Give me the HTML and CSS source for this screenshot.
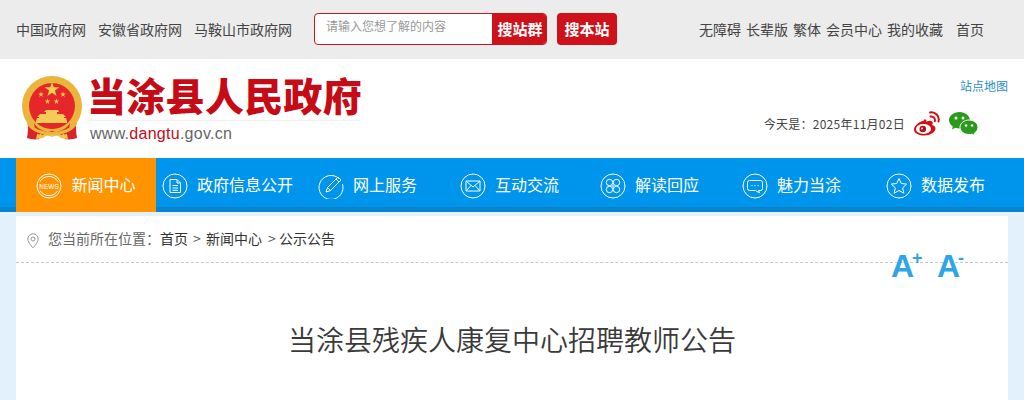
FILE: index.html
```html
<!DOCTYPE html>
<html lang="zh-CN">
<head>
<meta charset="utf-8">
<title>当涂县残疾人康复中心招聘教师公告</title>
<link rel="stylesheet" href="styles.css">
</head>
<body>
<div class="topbar">
  <div class="top-links">
    <a>中国政府网</a><a>安徽省政府网</a><a>马鞍山市政府网</a>
  </div>
  <div class="search">
    <div class="search-box">
      <span class="placeholder">请输入您想了解的内容</span>
      <span class="btn-group">搜站群</span>
    </div>
    <span class="btn-site">搜本站</span>
  </div>
  <div class="top-right">
    <a>无障碍</a><a>长辈版</a><a>繁体</a><a>会员中心</a><a>我的收藏</a><a class="home">首页</a>
  </div>
</div>

<header class="header">
  <div class="brand">
    <svg class="emblem" viewBox="0 0 60 64" width="60" height="64">
      <circle cx="30" cy="30" r="30" fill="#eab53a"/>
      <circle cx="30" cy="30" r="23" fill="#e5262b"/>
      <path d="M6 47c4 4 8 7 13 9l-2 7c-4 1-9 0-12-1 1-5 1-10 1-15zM54 47c-4 4-8 7-13 9l2 7c4 1 9 0 12-1-1-5-1-10-1-15z" fill="#d9232a"/>
      <path d="M12 47c3 6 10 9 18 9s15-3 18-9l-1 6-8 7-4-3-5-2-5 2-4 3-8-7z" fill="#d9232a"/>
      <path d="M14 63l1-5 6 1 4-4 5 2 5-2 4 4 6-1 1 5-7-1-4-3-5 2-5-2-4 3z" fill="#f0c24c"/>
      <path d="M30 6l1.800 5.300h5.600l-4.500 3.300 1.700 5.400-4.600-3.300-4.600 3.300 1.700-5.400-4.500-3.300h5.600z" fill="#f7d14c"/>
      <path d="M19 15.500l.7 2h2.100l-1.700 1.300.6 2.100-1.700-1.300-1.700 1.300.6-2.100-1.700-1.300h2.100zM41 15.500l.7 2h2.100l-1.700 1.300.6 2.100-1.700-1.300-1.700 1.300.6-2.100-1.700-1.300h2.100zM25.500 22.500l.7 2h2.100l-1.700 1.300.6 2.100-1.700-1.300-1.700 1.300.6-2.100-1.700-1.300h2.100zM34.500 22.500l.7 2h2.100l-1.700 1.300.6 2.100-1.700-1.300-1.700 1.300.6-2.100-1.700-1.300h2.100z" fill="#f7d14c"/>
      <path d="M24 34h12l1 2h-2v2h6l3 3h-2v1h2l1 3v2H14v-2l1-3h2v-1h-2l3-3h6v-2h-2z" fill="#f3cb56"/>
      <path d="M6 45c4 7 14 11 24 11s20-4 24-11l1 3c-4 8-15 11-25 11S9 56 5 48z" fill="#eab53a"/>
    </svg>
    <div class="brand-text">
      <div class="site-name">当涂县人民政府</div>
      <div class="site-url">www.<span class="url-red">dangtu</span>.gov.cn</div>
    </div>
  </div>
  <div class="header-right">
    <a class="sitemap">站点地图</a>
    <div class="date-row">
      <span class="date">今天是：2025年11月02日</span>
      <svg class="weibo" viewBox="0 0 27 25" width="27" height="25">
        <path d="M11 9.500C5.500 11 1 15 1 18.500 1 22 5.500 24.500 11 24.500c6.500 0 11.500-3.500 11.500-7 0-2-2-3-3.300-3.400.7-1.600.7-3-.2-3.800-1.300-1.100-3.700-.6-5.800.4.600-2-.3-2.500-2.200-2.200z" fill="#d40f12"/>
        <ellipse cx="10.500" cy="18" rx="7.500" ry="5" fill="#fff"/>
        <circle cx="9.800" cy="18" r="3.300" fill="#b80d12"/>
        <circle cx="9" cy="17.500" r="1" fill="#fff"/>
        <path d="M17 1.500c5-1 10 3.500 8.500 9M17.500 5.500c2.800-.6 5 2 4.300 4.700" fill="none" stroke="#d40f12" stroke-width="2" stroke-linecap="round"/>
      </svg>
      <svg class="wechat" viewBox="0 0 29 24" width="29" height="24">
        <path d="M10.500 0C4.700 0 0 3.700 0 8.300c0 2.600 1.500 4.800 3.800 6.300L3 17.500l3.300-1.700c1.400.4 2.800.6 4.200.6 5.800 0 10.500-3.700 10.500-8.100S16.300 0 10.500 0z" fill="#2a9a1c"/>
        <path d="M20 8c-4.800 0-9 3.200-9 7.300s4.200 7.200 9 7.200c1 0 2-.1 3-.4l3 1.700-.7-2.500c2.200-1.500 3.700-3.600 3.700-6 0-4.100-4.200-7.300-9-7.300z" fill="#2a9a1c" stroke="#fff" stroke-width="1"/>
        <circle cx="7" cy="6" r="1.500" fill="#fff"/><circle cx="14" cy="6" r="1.500" fill="#fff"/>
        <circle cx="17" cy="13.500" r="1.300" fill="#fff"/><circle cx="23" cy="13.500" r="1.300" fill="#fff"/>
      </svg>
    </div>
  </div>
</header>

<nav class="nav">
  <div class="nav-inner">
    <a class="nav-item active">
      <svg class="nav-icon" viewBox="0 0 26 26"><circle cx="13" cy="13" r="12" class="ic"/><path d="M4 8.500a10.500 10.500 0 0 1 18 0M4 17.500a10.500 10.500 0 0 0 18 0" class="ic"/><text x="13" y="15.500" class="news-text">NEWS</text></svg>
      <span>新闻中心</span>
    </a>
    <a class="nav-item">
      <svg class="nav-icon" viewBox="0 0 26 26"><circle cx="13" cy="13" r="12" class="ic"/><path d="M8 6.500h7l3.500 3.500v9.500H8zM15 6.500V10h3.500M10.500 12.500h5.500M10.500 15h5.500M10.500 17.300h5.500" class="ic"/></svg>
      <span>政府信息公开</span>
    </a>
    <a class="nav-item">
      <svg class="nav-icon" viewBox="0 0 26 26"><path d="M21 5.500A12 12 0 1 0 24.500 11" class="ic"/><path d="M8 19l1.500-4.500L20 4l3 3-10.500 10.500zM9.500 14.500l3 3M18 6l3 3" class="ic"/></svg>
      <span>网上服务</span>
    </a>
    <a class="nav-item">
      <svg class="nav-icon" viewBox="0 0 26 26"><circle cx="13" cy="13" r="12" class="ic"/><path d="M6 8h14v10H6zM6 8l7 6 7-6M6 18l5-5.500M20 18l-5-5.500" class="ic"/></svg>
      <span>互动交流</span>
    </a>
    <a class="nav-item">
      <svg class="nav-icon" viewBox="0 0 26 26"><circle cx="13" cy="13" r="12" class="ic"/><circle cx="9.500" cy="9.500" r="3.200" class="ic"/><circle cx="16.500" cy="9.500" r="3.200" class="ic"/><circle cx="9.500" cy="16.500" r="3.200" class="ic"/><circle cx="16.500" cy="16.500" r="3.200" class="ic"/><circle cx="13" cy="13" r="1.800" fill="#8fd0f7"/></svg>
      <span>解读回应</span>
    </a>
    <a class="nav-item">
      <svg class="nav-icon" viewBox="0 0 26 26"><circle cx="13" cy="13" r="12" class="ic"/><path d="M7.500 7.500h11a2 2 0 0 1 2 2v6a2 2 0 0 1-2 2h-2l1 2.500-4-2.500h-6a2 2 0 0 1-2-2v-6a2 2 0 0 1 2-2z" class="ic"/><path d="M9.500 12.500h1M12.500 12.500h1M15.500 12.500h1" class="ic"/></svg>
      <span>魅力当涂</span>
    </a>
    <a class="nav-item">
      <svg class="nav-icon" viewBox="0 0 26 26"><circle cx="13" cy="13" r="12" class="ic"/><path d="M13 5.500l2.300 5 5.400.6-4 3.700 1.100 5.400-4.800-2.700-4.800 2.700 1.100-5.400-4-3.700 5.400-.6z" class="ic"/></svg>
      <span>数据发布</span>
    </a>
  </div>
</nav>

<main class="main">
  <div class="crumb">
    <svg class="pin" viewBox="0 0 12 16" width="12" height="16"><path d="M6 .8a5.200 5.200 0 0 1 5.200 5.200C11.200 9.500 6 15 6 15S.8 9.500.8 6A5.200 5.200 0 0 1 6 .8z" fill="none" stroke="#999" stroke-width="1"/><circle cx="6" cy="6" r="2" fill="none" stroke="#999"/></svg>
    <span class="crumb-label">您当前所在位置：</span>
    <a>首页</a><span class="sep">&gt;</span><a>新闻中心</a><span class="sep sep-wide">&gt;</span><a>公示公告</a>
  </div>
  <div class="font-size">
    <span class="fs-btn">A<span class="fs-mark">+</span></span>
    <span class="fs-btn">A<span class="fs-mark">-</span></span>
  </div>
  <h1 class="title">当涂县残疾人康复中心招聘教师公告</h1>
</main>
</body>
</html>
```

FILE: styles.css
```css
* { box-sizing: border-box; }
html, body { margin: 0; padding: 0; }
body {
  background: #e3f1fd;
  font-family: "Noto Sans CJK SC", "Liberation Sans", sans-serif;
  font-weight: 400;
  color: #333;
  height: 400px;
  overflow: hidden;
}
.topbar {
  height: 59px;
  background: #ececec;
  display: flex;
  align-items: center;
  padding: 0 16px 1px;
  font-size: 14px;
  color: #444;
}
.top-links { display: flex; gap: 12px; width: 298px; }
.search { display: flex; gap: 10px; width: 385px; height: 32px; }
.search-box {
  width: 233px;
  display: flex;
  justify-content: space-between;
  border: 1px solid #c8161d;
  border-radius: 4px;
  background: #fff;
  overflow: hidden;
}
.placeholder { font-size: 12px; color: #999; padding: 3px 0 0 11px; line-height: 18px; }
.btn-group, .btn-site {
  background: #cf111b;
  color: #fff;
  font-size: 15px;
  font-weight: 700;
  line-height: 30px;
  text-align: center;
}
.btn-group { width: 54px; padding-left: 2px; }
.btn-site { width: 60px; border-radius: 4px; line-height: 32px; }
.top-right { display: flex; gap: 5px; }
.top-right .home { margin-left: 8px; }
.header {
  height: 99px;
  background: #fff;
  display: flex;
  justify-content: space-between;
  padding: 0 16px;
}
.brand { display: flex; padding: 17px 0 0 6px; }
.emblem { margin-right: 5px; }
.brand-text { width: 273px; }
.site-name {
  font-family: "Noto Sans CJK SC", sans-serif;
  font-size: 39px;
  font-weight: 900;
  letter-spacing: 0.3px;
  color: #c60a16;
  line-height: 36px;
  white-space: nowrap;
  border-bottom: 1px solid #f0f0f0;
  height: 45px;
}
.site-url {
  font-family: "Liberation Sans", sans-serif;
  font-size: 16px;
  letter-spacing: 0.27px;
  color: #666;
  line-height: 26px;
  padding-left: 3px;
}
.url-red { color: #c60a16; }
.header-right {
  display: flex;
  flex-direction: column;
  align-items: flex-end;
  padding-top: 18px;
}
.sitemap { font-size: 12px; color: #2a8ec8; line-height: 18px; }
.date-row { display: flex; align-items: center; margin-top: 16px; margin-right: 30px; }
.date { font-size: 12px; color: #444; margin-right: 8px; letter-spacing: 0.27px; }
.weibo { margin-right: 9px; }
.nav { height: 54px; background: #0095ec; border-bottom: 5px solid #0a83cd; padding: 0 16px; }
.nav-inner {
  display: grid;
  grid-template-columns: 140px 143px 137px 147px 133px 151px 137px;
  height: 54px;
}
.nav-item {
  display: flex;
  align-items: center;
  justify-content: center;
  gap: 9px;
  color: #fff;
  font-size: 16px;
  height: 49px;
  padding-top: 2px;
  white-space: nowrap;
}
.nav-item.active { background: #ff9300; height: 54px; padding-bottom: 5px; }
.nav-icon { width: 26px; height: 26px; flex: none; margin-top: 5px; }
.ic { fill: none; stroke: #fff; stroke-width: 1; }
.news-text { fill: #fff; font-size: 6.500px; font-family: "Liberation Sans", sans-serif; text-anchor: middle; }
.main {
  position: relative;
  margin: 4px 16px 0;
  background: #fff;
  height: 184px;
}
.crumb {
  height: 47px;
  border-bottom: 1px dashed #c8c8c8;
  display: flex;
  align-items: center;
  padding: 0 0 2px 11px;
  font-size: 14px;
  color: #333;
}
.pin { margin: 5px 9px 0 0; }
.crumb-label { color: #666; }
.sep { margin: 0 5px; color: #555; width: 8px; text-align: center; }
.sep-wide { margin: 0 3px 0 6px; }
.font-size {
  position: absolute;
  top: 30px;
  left: 875px;
  display: flex;
  gap: 13px;
  color: #2fa4e7;
  font-family: "Liberation Sans", sans-serif;
  font-size: 32px;
  font-weight: 700;
  line-height: 40px;
}
.fs-btn { display: flex; align-items: flex-start; width: 33px; }
.fs-mark { font-size: 18px; line-height: 18px; margin: 3px 0 0 -2px; }
.title {
  margin: 56px 0 0;
  text-align: center;
  font-size: 28px;
  font-weight: 350;
  line-height: 40px;
  color: #3a3a3a;
}
```
